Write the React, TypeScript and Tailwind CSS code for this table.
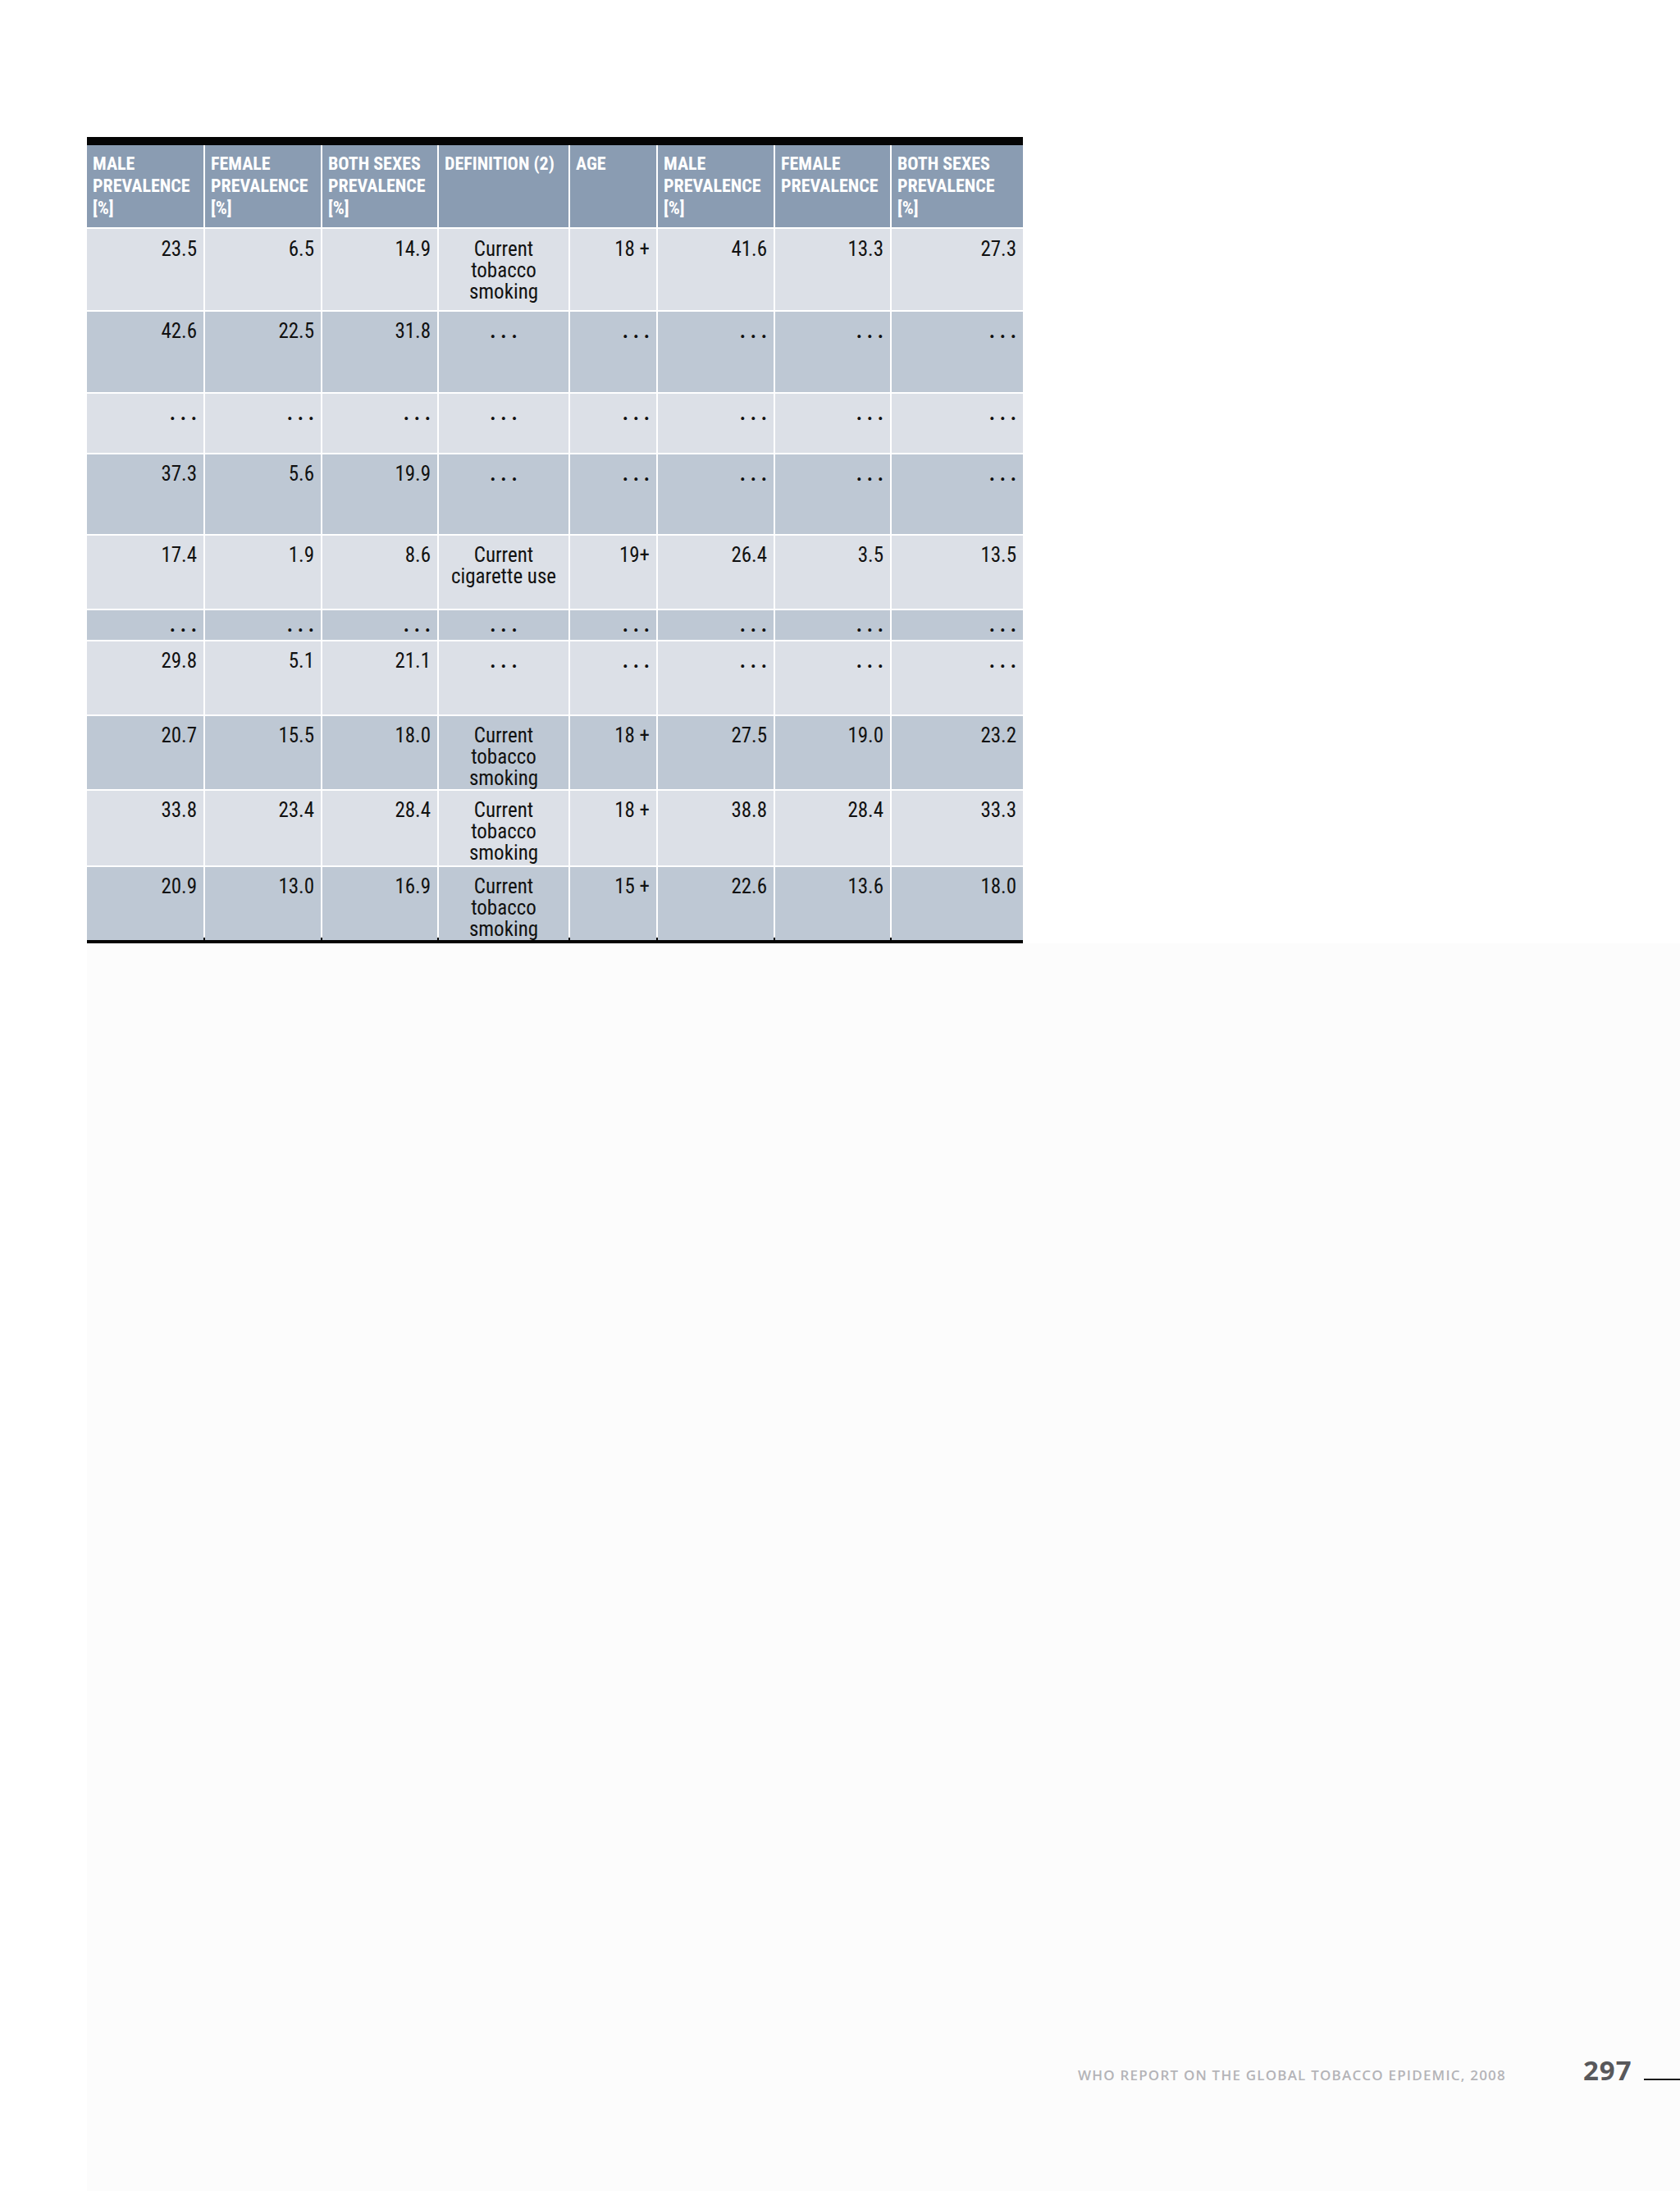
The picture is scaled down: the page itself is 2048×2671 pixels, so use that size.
import React from "react";

const COLS =
  "grid grid-cols-[142px_141px_140px_158px_105px_141px_140px_160px] gap-x-[2px]";

const D = ". . .";

type Row = {
  h: string;
  pt: string;
  bg: string;
  cells: (string | string[])[];
};

const LIGHT = "bg-[#dce0e7]";
const DARK = "bg-[#bec8d4]";
const CTS = ["Current", "tobacco", "smoking"];

const rows: Row[] = [
  { h: "h-[99px]", pt: "pt-[12px]", bg: LIGHT, cells: ["23.5", "6.5", "14.9", CTS, "18 +", "41.6", "13.3", "27.3"] },
  { h: "h-[98px]", pt: "pt-[11px]", bg: DARK, cells: ["42.6", "22.5", "31.8", D, D, D, D, D] },
  { h: "h-[72px]", pt: "pt-[11px]", bg: LIGHT, cells: [D, D, D, D, D, D, D, D] },
  { h: "h-[97px]", pt: "pt-[11px]", bg: DARK, cells: ["37.3", "5.6", "19.9", D, D, D, D, D] },
  { h: "h-[89px]", pt: "pt-[11px]", bg: LIGHT, cells: ["17.4", "1.9", "8.6", ["Current", "cigarette use"], "19+", "26.4", "3.5", "13.5"] },
  { h: "h-[36px]", pt: "pt-[5px]", bg: DARK, cells: [D, D, D, D, D, D, D, D] },
  { h: "h-[89px]", pt: "pt-[11px]", bg: LIGHT, cells: ["29.8", "5.1", "21.1", D, D, D, D, D] },
  { h: "h-[89px]", pt: "pt-[11px]", bg: DARK, cells: ["20.7", "15.5", "18.0", CTS, "18 +", "27.5", "19.0", "23.2"] },
  { h: "h-[91px]", pt: "pt-[11px]", bg: LIGHT, cells: ["33.8", "23.4", "28.4", CTS, "18 +", "38.8", "28.4", "33.3"] },
  { h: "h-[86px]", pt: "pt-[11px]", bg: DARK, cells: ["20.9", "13.0", "16.9", CTS, "15 +", "22.6", "13.6", "18.0"] },
];

const headers: string[][] = [
  ["MALE", "PREVALENCE", "[%]"],
  ["FEMALE", "PREVALENCE", "[%]"],
  ["BOTH SEXES", "PREVALENCE", "[%]"],
  ["DEFINITION (2)"],
  ["AGE"],
  ["MALE", "PREVALENCE", "[%]"],
  ["FEMALE", "PREVALENCE"],
  ["BOTH SEXES", "PREVALENCE", "[%]"],
];

function Lines({ lines }: { lines: string[] }) {
  return (
    <>
      {lines.map((l, i) => (
        <span key={i} className="block whitespace-nowrap">
          {l}
        </span>
      ))}
    </>
  );
}

export default function App() {
  return (
    <div className="w-[2048px] h-[2671px] bg-white flex flex-col font-['Roboto_Condensed','DejaVu_Sans_Condensed',sans-serif]">
      <div className="pt-[167px] pl-[106px]">
        <div className="w-[1141px]">
          <div className="h-[10px] bg-[#050505]" />
          <div className="flex flex-col gap-y-[2px] bg-white">
            <div className={`${COLS} h-[100px]`}>
              {headers.map((h, i) => (
                <div
                  key={i}
                  className="bg-[#8a9cb2] text-white font-bold text-[22px] leading-[27px] tracking-[0px] pt-[9px] pl-[7px]"
                >
                  <Lines lines={h} />
                </div>
              ))}
            </div>
            {rows.map((r, ri) => (
              <div key={ri} className={`${COLS} ${r.h}`}>
                {r.cells.map((c, ci) => {
                  const isDef = ci === 3;
                  return (
                    <div
                      key={ci}
                      className={`${r.bg} ${r.pt} text-[25px] leading-[26px] text-[#111111] ${
                        isDef ? "text-center px-[4px]" : "text-right pr-[8px]"
                      }`}
                    >
                      {Array.isArray(c) ? (
                        <Lines lines={c} />
                      ) : c === D ? (
                        <span className="whitespace-pre font-bold">{c}</span>
                      ) : (
                        <span className="whitespace-pre">{c}</span>
                      )}
                    </div>
                  );
                })}
              </div>
            ))}
          </div>
          <div className="h-[7px] bg-[#050505]" />
        </div>
      </div>
      <div className="flex-1 ml-[106px] bg-[#fcfcfc] flex flex-col">
        <div className="mt-[1358px] flex items-baseline pl-[1208px] font-['Open_Sans',sans-serif]">
          <span className="text-[17px] leading-[23px] font-semibold tracking-[1.2px] text-[#b4b4b8] whitespace-nowrap">
            WHO REPORT ON THE GLOBAL TOBACCO EPIDEMIC, 2008
          </span>
          <span className="ml-[94px] text-[33px] leading-[32px] font-bold tracking-[1px] text-[#58585b]">297</span>
          <span className="ml-[14px] inline-block w-[44px] h-[2px] bg-[#1a1a1a]" />
        </div>
      </div>
    </div>
  );
}
